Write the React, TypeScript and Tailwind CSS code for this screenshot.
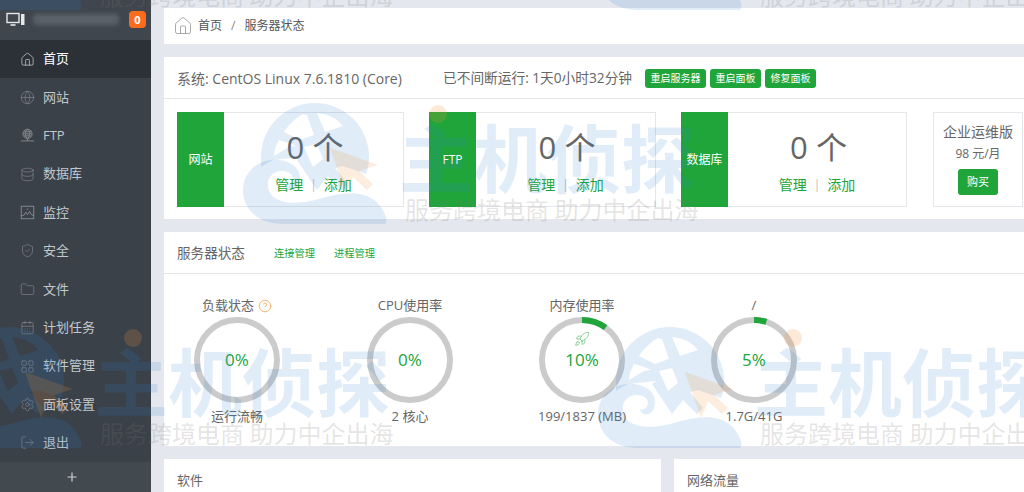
import { CircleHelp, Database, Folder, Globe, Home, LayoutGrid, LogOut, Rocket, Settings, ShieldCheck, CalendarDays, Plus } from "lucide-react";
import type { ReactNode } from "react";

const fontStack = "font-['Open_Sans','Noto_Sans_CJK_SC',sans-serif]";

function FtpIcon() {
  return (
    <svg width="15" height="15" viewBox="0 0 18 18" fill="none" stroke="currentColor" strokeWidth="1.1">
      <circle cx="9" cy="7" r="5.5" />
      <ellipse cx="9" cy="7" rx="2.4" ry="5.5" />
      <path d="M3.5 7h11M4.5 4.5h9M4.5 9.5h9M9 12.5v3M1 15.5h16" />
    </svg>
  );
}

function MonitorIcon() {
  return (
    <svg width="19" height="18" viewBox="0 0 19 18" fill="none" stroke="currentColor">
      <rect x="1" y="2.5" width="12" height="9" strokeWidth="1.4" />
      <path d="M4.5 14h5" strokeWidth="1.6" />
      <rect x="15" y="3" width="3.5" height="11" fill="currentColor" stroke="none" />
    </svg>
  );
}

function ChartIcon() {
  return (
    <svg width="15" height="15" viewBox="0 0 18 18" fill="none" stroke="currentColor" strokeWidth="1.1">
      <rect x="1.5" y="1.5" width="15" height="15" />
      <path d="M1.5 13l3.5-1 2-3.5 2 3 2.5-4 2 4 3 1.5" />
      <path d="M8 5h2" />
    </svg>
  );
}

const navItems: { label: string; icon: ReactNode; active?: boolean }[] = [
  { label: "首页", icon: <Home size={15} strokeWidth={1.1} />, active: true },
  { label: "网站", icon: <Globe size={15} strokeWidth={1} /> },
  { label: "FTP", icon: <FtpIcon /> },
  { label: "数据库", icon: <Database size={15} strokeWidth={1} /> },
  { label: "监控", icon: <ChartIcon /> },
  { label: "安全", icon: <ShieldCheck size={15} strokeWidth={1} /> },
  { label: "文件", icon: <Folder size={15} strokeWidth={1} /> },
  { label: "计划任务", icon: <CalendarDays size={15} strokeWidth={1} /> },
  { label: "软件管理", icon: <LayoutGrid size={15} strokeWidth={1} /> },
  { label: "面板设置", icon: <Settings size={15} strokeWidth={1} /> },
  { label: "退出", icon: <LogOut size={15} strokeWidth={1} /> },
];

function Sidebar() {
  return (
    <aside className="flex h-full w-[151px] shrink-0 flex-col bg-[#3a4149]">
      <div className="flex h-10 items-center bg-[#3f464e] pl-[6px] pr-[5px] text-[#e6e8ea]">
        <MonitorIcon />
        <div className="ml-[8px] h-[11px] w-[86px] rounded-sm bg-[#5a6168] blur-[2px]" />
        <span className="ml-auto flex h-[17px] w-[17px] items-center justify-center rounded-[4px] bg-[#f96c1e] text-[11px] font-bold text-white">
          0
        </span>
      </div>
      <nav className="flex flex-1 flex-col">
        {navItems.map((item) => (
          <div
            key={item.label}
            className={
              item.active
                ? "flex h-[38.4px] items-center gap-[8px] bg-[#2c3138] pl-[20px] text-[13px] text-white"
                : "flex h-[38.4px] items-center gap-[8px] pl-[20px] text-[13px] text-[#c3c8cc]"
            }
          >
            <span className={item.active ? "text-[#d5d8da]" : "text-[#878c91]"}>{item.icon}</span>
            <span>{item.label}</span>
          </div>
        ))}
      </nav>
      <div className="flex h-[30px] items-center justify-center bg-[#42494f] pr-[7px] text-[#d0d3d6]">
        <Plus size={14} strokeWidth={2} />
      </div>
    </aside>
  );
}

function StatBox({ label, width }: { label: string; width: string }) {
  return (
    <div className={`flex h-[95px] shrink-0 border border-l-0 border-[#e4e6e9] ${width}`}>
      <div className="-my-px flex w-[47px] shrink-0 items-center justify-center bg-[#20a53a] text-[12px] text-white">{label}</div>
      <div className="flex flex-1 flex-col items-center pt-[14px]">
        <div className="pl-[3px] text-[31px] leading-[40px] text-[#666]">0 个</div>
        <div className="mt-[8px] flex items-center text-[14px] leading-5 text-[#20a53a]">
          <span>管理</span>
          <span className="mx-[7px] text-[12px] text-[#bbb]">|</span>
          <span>添加</span>
        </div>
      </div>
    </div>
  );
}

function Gauge({ title, value, percent, note, help, rocket, width }: { title: string; value: string; percent: number; note: string; help?: boolean; rocket?: boolean; width: string }) {
  const r = 40;
  const c = 2 * Math.PI * r;
  return (
    <div className={`flex shrink-0 flex-col items-center ${width}`}>
      <div className="flex h-5 items-center gap-[4px] whitespace-nowrap text-[13px] text-[#666]">
        {title}
        {help && <CircleHelp size={14} strokeWidth={1.3} className="text-[#f0a04b]" />}
      </div>
      <div className="relative mt-[1px] h-[86px] w-[86px]">
        <svg width="86" height="86" viewBox="0 0 86 86">
          <circle cx="43" cy="43" r={r} fill="none" stroke="#cbcbcb" strokeWidth="6" />
          {percent > 0 && (
            <circle
              cx="43"
              cy="43"
              r={r}
              fill="none"
              stroke="#20a53a"
              strokeWidth="6"
              strokeDasharray={`${(c * percent) / 100} ${c}`}
              transform="rotate(-90 43 43)"
            />
          )}
        </svg>
        {rocket && <Rocket size={16} strokeWidth={1} className="absolute left-[35px] top-[14px] text-[#58bd6c]" />}
        <span className="absolute inset-0 flex items-center justify-center text-[17px] text-[#20a53a]">{value}</span>
      </div>
      <div className="mt-[3px] whitespace-nowrap text-[13px] leading-5 text-[#666]">{note}</div>
    </div>
  );
}

function Watermark({ position }: { position: string }) {
  return (
    <div className={`pointer-events-none absolute flex gap-[17px] ${position}`}>
      <svg width="145" height="122" viewBox="0 0 145 122" className="shrink-0">
        <g fill="#2f7fd0" fillOpacity="0.15">
          <path fillRule="evenodd" d="M18 55a54 54 0 0 1 108 0c0 6-1 12-3 17l-23-8-8 2 13 16-6 6-14-14-11 14-20-30 4-3-28 3c-6 3-12 7-12 7zM60 12c-6 3-14 10-19 18l16 8 14-5-7-20zm14-1 8 19 18-6c-6-8-15-12-26-13zM36 38c-3 5-5 11-5 16l15-9 7-1-4-2zm25 7 9 20 10-8-6-15z" />
          <path d="M0 88c0-20 18-32 36-30 16 2 24 12 20 24-3 8-12 8-14 2 10 0 12-14-2-15-12-1-18 10-14 20 6 14 30 14 50 8 26-8 56-12 67 18 1 3 0 6-1 7H40C16 122 0 108 0 88z" />
        </g>
        <path d="M87 46l48 17-19 6 14 13-6 6-14-13-7 17z" fill="#f2933a" fillOpacity="0.17" />
      </svg>
      <div className="relative flex w-[300px] shrink-0 flex-col pt-[14px] font-['Noto_Sans_CJK_SC',sans-serif]">
        <div className="-ml-[6px] whitespace-nowrap text-[74px] font-bold leading-[78px] text-[#2f7fd0]/15">主机侦探</div>
        <div className="whitespace-nowrap text-[24px] leading-[30px] text-[#777]/20">服务跨境电商 助力中企出海</div>
        <span className="absolute left-[24px] top-[3px] h-[18px] w-[18px] rounded-full bg-[#f2933a]/20" />
      </div>
    </div>
  );
}

export default function App() {
  return (
    <div className={`relative flex h-[492px] w-[1024px] overflow-hidden bg-[#e4e7ed] ${fontStack}`}>
      <Sidebar />
      <main className="flex min-w-0 flex-1 flex-col pl-[13px] pt-2">
        <div className="flex h-[36px] items-center bg-white pl-[9px] text-[12px] text-[#555]">
          <Home size={20} strokeWidth={1} className="text-[#999]" />
          <span className="ml-[5px]">首页</span>
          <span className="mx-[9px] text-[#888]">/</span>
          <span>服务器状态</span>
        </div>

        <section className="mt-[13px] h-[162px] bg-white">
          <div className="flex h-[42px] items-center border-b border-[#e4e6e9] pl-[13px] pt-[2px] text-[14px] text-[#666]">
            <span className="w-[266px]">系统: CentOS Linux 7.6.1810 (Core)</span>
            <span className="text-[13.7px]">已不间断运行: 1天0小时32分钟</span>
            <div className="ml-[13px] flex gap-[4px] text-[10px] text-white">
              <span className="flex h-[19px] w-[61px] items-center justify-center rounded-[3px] bg-[#20a53a]">重启服务器</span>
              <span className="flex h-[19px] w-[51px] items-center justify-center rounded-[3px] bg-[#20a53a]">重启面板</span>
              <span className="flex h-[19px] w-[51px] items-center justify-center rounded-[3px] bg-[#20a53a]">修复面板</span>
            </div>
          </div>
          <div className="flex pl-[13px] pt-[13px]">
            <StatBox label="网站" width="w-[227px]" />
            <div className="w-[25px] shrink-0" />
            <StatBox label="FTP" width="w-[227px]" />
            <div className="w-[25px] shrink-0" />
            <StatBox label="数据库" width="w-[226px]" />
            <div className="ml-[26px] flex h-[95px] w-[90px] shrink-0 flex-col items-center border border-[#e4e6e9] pt-[9px] text-[#666]">
              <div className="text-[14px] leading-5">企业运维版</div>
              <div className="mt-[2px] text-[12px] leading-5">98 元/月</div>
              <div className="mt-[5px] flex h-[26px] w-[40px] items-center justify-center rounded-[3px] bg-[#20a53a] text-[11px] text-white">购买</div>
            </div>
          </div>
        </section>

        <section className="mt-[13px] h-[214px] bg-white">
          <div className="flex h-[42px] items-center border-b border-[#e4e6e9] pl-[13px] pt-[2px]">
            <span className="text-[13.6px] text-[#666]">服务器状态</span>
            <span className="ml-[29px] text-[10.25px] text-[#20a53a]">连接管理</span>
            <span className="ml-[19px] text-[10.25px] text-[#20a53a]">进程管理</span>
          </div>
          <div className="flex pl-[30px] pt-[22px]">
            <Gauge title="负载状态" value="0%" percent={0} note="运行流畅" help width="w-[86px]" />
            <div className="w-[87px] shrink-0" />
            <Gauge title="CPU使用率" value="0%" percent={0} note="2 核心" width="w-[86px]" />
            <div className="w-[86px] shrink-0" />
            <Gauge title="内存使用率" value="10%" percent={10} note="199/1837 (MB)" rocket width="w-[86px]" />
            <div className="w-[86px] shrink-0" />
            <Gauge title="/" value="5%" percent={5} note="1.7G/41G" width="w-[86px]" />
          </div>
        </section>

        <div className="mt-[13px] flex flex-1 gap-[13px]">
          <section className="w-[497px] bg-white pl-[13px] pt-[12px] text-[13px] text-[#666]">软件</section>
          <section className="flex-1 bg-white pl-[13px] pt-[12px] text-[13px] text-[#666]">网络流量</section>
        </div>
      </main>

      <Watermark position="left-[-62px] top-[-112px]" />
      <Watermark position="left-[598px] top-[-112px]" />
      <Watermark position="left-[243px] top-[102px]" />
      <Watermark position="left-[-62px] top-[326px]" />
      <Watermark position="left-[598px] top-[326px]" />
    </div>
  );
}
